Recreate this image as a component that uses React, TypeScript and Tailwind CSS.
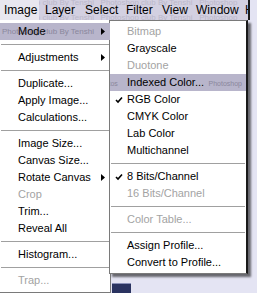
import React from 'react';

type Item =
  | { sep: true }
  | { label: string; disabled?: boolean; arrow?: boolean; check?: boolean; active?: boolean; mark?: string };

const mainItems: Item[] = [
  { label: 'Mode', arrow: true, active: true, mark: 'mode' },
  { sep: true },
  { label: 'Adjustments', arrow: true },
  { sep: true },
  { label: 'Duplicate...' },
  { label: 'Apply Image...' },
  { label: 'Calculations...' },
  { sep: true },
  { label: 'Image Size...' },
  { label: 'Canvas Size...' },
  { label: 'Rotate Canvas', arrow: true },
  { label: 'Crop', disabled: true },
  { label: 'Trim...' },
  { label: 'Reveal All' },
  { sep: true },
  { label: 'Histogram...' },
  { sep: true },
  { label: 'Trap...', disabled: true },
];

const modeItems: Item[] = [
  { label: 'Bitmap', disabled: true },
  { label: 'Grayscale' },
  { label: 'Duotone', disabled: true },
  { label: 'Indexed Color...', active: true, mark: 'indexed' },
  { label: 'RGB Color', check: true },
  { label: 'CMYK Color' },
  { label: 'Lab Color' },
  { label: 'Multichannel' },
  { sep: true },
  { label: '8 Bits/Channel', check: true },
  { label: '16 Bits/Channel', disabled: true },
  { sep: true },
  { label: 'Color Table...', disabled: true },
  { sep: true },
  { label: 'Assign Profile...' },
  { label: 'Convert to Profile...' },
];

// menu bar titles with their slot widths
const bar = [
  { label: 'Image', w: 'w-[39px] pl-[4px] bg-[#e8e7ef]' },
  { label: 'Layer', w: 'w-[42px] pl-[6px]' },
  { label: 'Select', w: 'w-[41px] pl-[4px]' },
  { label: 'Filter', w: 'w-[36px] pl-[4px]' },
  { label: 'View', w: 'w-[34px] pl-[4px]' },
  { label: 'Window', w: 'w-[49px] pl-[4px]' },
  { label: 'H', w: 'w-[7px] pl-[4px]' },
];

const Arrow = () => (
  <svg width="4" height="7" viewBox="0 0 4 7" className="absolute right-[5px] top-[5px]">
    <path d="M0 0 L4 3.5 L0 7 Z" fill="#000" />
  </svg>
);

const Check = () => (
  <svg width="8" height="8" viewBox="0 0 8 8" className="absolute left-[5px] top-[5px]">
    <path d="M1 4 L3 6 L7 1.5" stroke="#000" strokeWidth="1.6" fill="none" />
  </svg>
);

const Separator = () => (
  <div className="h-[9px] flex flex-col justify-center px-[1px]">
    <div className="h-[1px] bg-[#a0a0a0]" />
  </div>
);

const Row = ({ item, indent }: { item: Exclude<Item, { sep: true }>; indent: string }) => (
  <div
    className={`relative h-[17px] flex items-center overflow-hidden ${indent} text-[11px] leading-none ${
      item.active ? 'bg-[#b8b5cb]' : ''
    } ${item.disabled ? 'text-[#a3a3a3]' : 'text-black'}`}
  >
    {item.mark === 'mode' && (
      <span className="absolute left-[2px] top-[5px] text-[8px] text-[#8a879c] whitespace-nowrap">
        Photoshop club By Tenshi
      </span>
    )}
    {item.mark === 'indexed' && (
      <>
        <span className="absolute left-[-14px] top-[6px] text-[7px] text-[#8a879c] whitespace-nowrap">
          Photos
        </span>
        <span className="absolute right-[4px] top-[6px] text-[7px] text-[#8a879c] whitespace-nowrap">
          Photoshop
        </span>
      </>
    )}
    {item.check && <Check />}
    <span className="relative whitespace-nowrap">{item.label}</span>
    {item.arrow && <Arrow />}
  </div>
);

const Menu = ({ items, indent }: { items: Item[]; indent: string }) => (
  <>
    {items.map((item, i) =>
      'sep' in item ? <Separator key={i} /> : <Row key={i} item={item} indent={indent} />
    )}
  </>
);

export default function App() {
  return (
    <div className="w-[257px] h-[293px] overflow-hidden bg-[#e4e4f3] font-['Liberation_Sans',Arial,sans-serif]">
      {/* menu bar */}
      <div className="flex h-[20px]">
        <div className="relative w-[248px] h-[20px] bg-[#d3d0e1] overflow-hidden flex">
          <span className="absolute left-[2px] top-[-3px] text-[8px] text-[#bbb8ca] whitespace-nowrap">
            Photoshop club By Tenshi&nbsp;&nbsp;&nbsp;Photoshop club By Tenshi&nbsp;&nbsp;&nbsp;Photoshop
          </span>
          <span className="absolute left-[2px] top-[12px] text-[8px] text-[#bbb8ca] whitespace-nowrap">
            Photoshop club By Tenshi&nbsp;&nbsp;&nbsp;Photoshop club By Tenshi&nbsp;&nbsp;&nbsp;Photoshop
          </span>
          {bar.map((b) => (
            <div
              key={b.label}
              className={`relative h-[20px] shrink-0 flex items-center text-[12px] text-black ${b.w}`}
            >
              {b.label}
            </div>
          ))}
        </div>
        <div className="w-[2px] h-[20px] bg-[#1a1a1a]" />
      </div>

      <div className="flex items-start">
        {/* Image menu */}
        <div className="w-[111px] h-[273px] bg-white border-r border-b border-[#7a7a7a] pt-[3px] shrink-0">
          <Menu items={mainItems} indent="pl-[18px]" />
        </div>
        {/* Mode submenu */}
        <div className="ml-[-2px] flex flex-col shrink-0">
          <div className="w-[139px] bg-white border border-[#7a7a7a] border-r-[2px] border-r-[#1a1a1a] py-[2px] shadow-[3px_3px_2px_rgba(0,0,0,0.55)]">
            <Menu items={modeItems} indent="pl-[17px]" />
          </div>
          <div className="mt-[9px] ml-[3px] w-[19px] h-[10px] bg-[#2a3360] border-t border-[#8a90b8]" />
        </div>
      </div>
    </div>
  );
}
